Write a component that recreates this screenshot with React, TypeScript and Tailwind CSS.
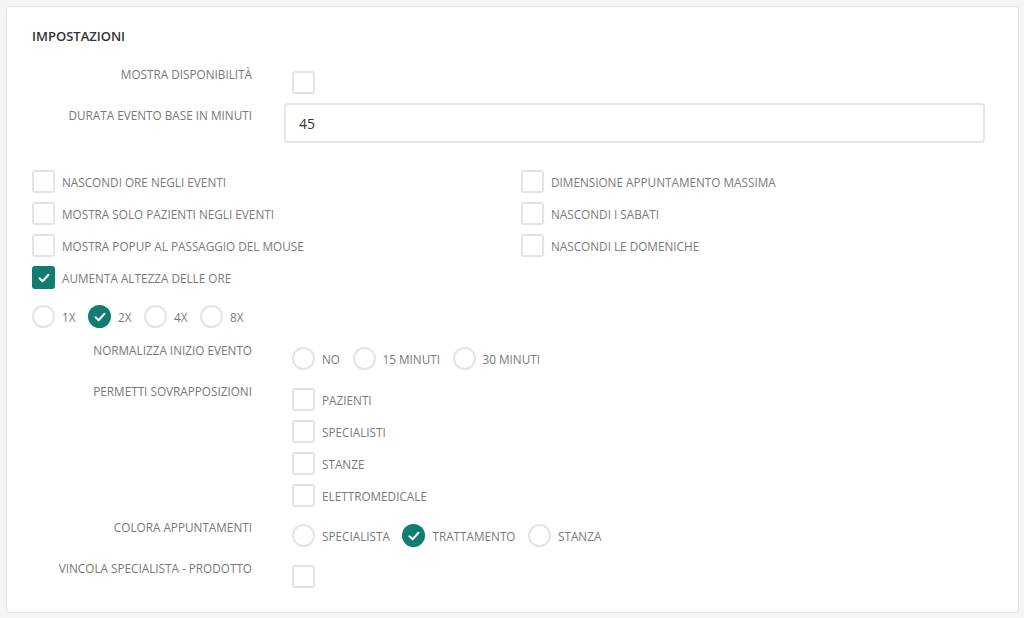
import React from "react";

const TEAL = "bg-[#117c70]";

function Check() {
  return (
    <svg width="12" height="10" viewBox="0 0 12 10" fill="none">
      <path d="M1.5 5.2 L4.6 8.2 L10.5 1.8" stroke="white" strokeWidth="2" strokeLinecap="round" strokeLinejoin="round" />
    </svg>
  );
}

function Box({ checked = false }: { checked?: boolean }) {
  return checked ? (
    <span className={`flex h-[23px] w-[23px] shrink-0 items-center justify-center rounded-[3px] ${TEAL}`}>
      <Check />
    </span>
  ) : (
    <span className="block h-[23px] w-[23px] shrink-0 rounded-[3px] border-2 border-[#e4e4e4] bg-white" />
  );
}

function Radio({ checked = false }: { checked?: boolean }) {
  return checked ? (
    <span className={`flex h-[23px] w-[23px] shrink-0 items-center justify-center rounded-full ${TEAL}`}>
      <Check />
    </span>
  ) : (
    <span className="block h-[23px] w-[23px] shrink-0 rounded-full border-2 border-[#e4e4e4] bg-white" />
  );
}

function CheckItem({ label, checked }: { label: string; checked?: boolean }) {
  return (
    <div className="flex h-[23px] items-center gap-[7px]">
      <Box checked={checked} />
      <span className="text-[11.75px] leading-[18px] text-[#7a7a7a]">{label}</span>
    </div>
  );
}

function RadioItem({ label, checked }: { label: string; checked?: boolean }) {
  return (
    <div className="flex h-[23px] items-center gap-[7px]">
      <Radio checked={checked} />
      <span className="text-[11.75px] leading-[18px] text-[#7a7a7a]">{label}</span>
    </div>
  );
}

function Label({ children, extra = "" }: { children: React.ReactNode; extra?: string }) {
  return (
    <div className={`w-[220px] shrink-0 text-right text-[11.75px] leading-[18px] text-[#777] ${extra}`}>{children}</div>
  );
}

export default function App() {
  return (
    <div
      className="h-[618px] w-[1024px] overflow-hidden bg-[#f4f5f7] pl-[6px] pt-[6px]"
      style={{ fontFamily: '"Open Sans", "Noto Sans", sans-serif' }}
    >
      <div className="h-[607px] w-[1013px] rounded-[4px] border border-[#e3e5e8] bg-white pl-[25px] pr-[33px]">
        <div className="mt-[20px] h-[18px] text-[13px] font-semibold leading-[18px] text-[#333]">IMPOSTAZIONI</div>

        {/* Mostra disponibilità */}
        <div className="mt-[20px] flex">
          <Label>MOSTRA DISPONIBILITÀ</Label>
          <div className="ml-[40px] pt-[6px]">
            <Box />
          </div>
        </div>

        {/* Durata */}
        <div className="mt-[9px] flex">
          <Label extra="pt-[3px]">DURATA EVENTO BASE IN MINUTI</Label>
          <div className="ml-[32px] flex-1">
            <div className="flex h-[40px] items-center rounded-[4px] border-2 border-[#e6e6e6] pl-[13px] text-[14px] text-[#333]">
              45
            </div>
          </div>
        </div>

        {/* Grid of checkboxes */}
        <div className="mt-[27px] grid grid-cols-[489px_1fr] gap-y-[9px]">
          <div className="flex flex-col gap-[9px]">
            <CheckItem label="NASCONDI ORE NEGLI EVENTI" />
            <CheckItem label="MOSTRA SOLO PAZIENTI NEGLI EVENTI" />
            <CheckItem label="MOSTRA POPUP AL PASSAGGIO DEL MOUSE" />
            <CheckItem label="AUMENTA ALTEZZA DELLE ORE" checked />
          </div>
          <div className="flex flex-col gap-[9px]">
            <CheckItem label="DIMENSIONE APPUNTAMENTO MASSIMA" />
            <CheckItem label="NASCONDI I SABATI" />
            <CheckItem label="NASCONDI LE DOMENICHE" />
          </div>
        </div>

        {/* Multiplier radios */}
        <div className="mt-[16px] flex gap-[12.5px]">
          <RadioItem label="1X" />
          <RadioItem label="2X" checked />
          <RadioItem label="4X" />
          <RadioItem label="8X" />
        </div>

        {/* Normalizza */}
        <div className="mt-[13px] flex">
          <Label>NORMALIZZA INIZIO EVENTO</Label>
          <div className="ml-[40px] flex gap-[12.5px] pt-[6px]">
            <RadioItem label="NO" />
            <RadioItem label="15 MINUTI" />
            <RadioItem label="30 MINUTI" />
          </div>
        </div>

        {/* Permetti */}
        <div className="mt-[12px] flex">
          <Label>PERMETTI SOVRAPPOSIZIONI</Label>
          <div className="ml-[40px] flex flex-col gap-[9px] pt-[6px]">
            <CheckItem label="PAZIENTI" />
            <CheckItem label="SPECIALISTI" />
            <CheckItem label="STANZE" />
            <CheckItem label="ELETTROMEDICALE" />
          </div>
        </div>

        {/* Colora */}
        <div className="mt-[11px] flex">
          <Label>COLORA APPUNTAMENTI</Label>
          <div className="ml-[40px] flex gap-[12.5px] pt-[6px]">
            <RadioItem label="SPECIALISTA" />
            <RadioItem label="TRATTAMENTO" checked />
            <RadioItem label="STANZA" />
          </div>
        </div>

        {/* Vincola */}
        <div className="mt-[12px] flex">
          <Label>VINCOLA SPECIALISTA - PRODOTTO</Label>
          <div className="ml-[40px] pt-[6px]">
            <Box />
          </div>
        </div>
      </div>
    </div>
  );
}
